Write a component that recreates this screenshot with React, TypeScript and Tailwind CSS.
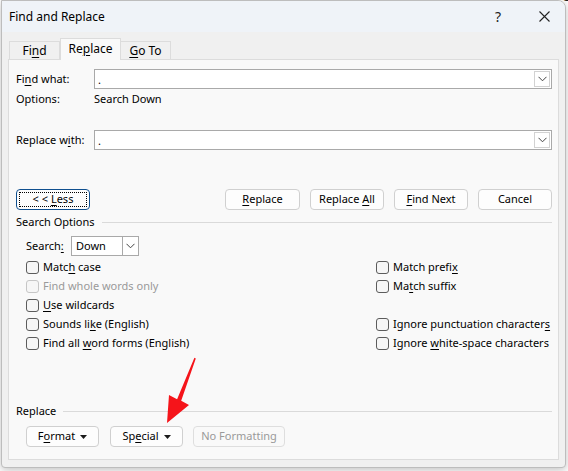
import React from 'react';

const font = { fontFamily: '"Noto Sans", "Open Sans", sans-serif' };

const U: React.FC<{ children: React.ReactNode }> = ({ children }) => (
  <span className="underline underline-offset-2">{children}</span>
);

const Chevron = () => (
  <svg width="9" height="6" viewBox="0 0 9 6" fill="none">
    <path d="M0.5 0.8 L4.5 4.8 L8.5 0.8" stroke="#444" strokeWidth="1" />
  </svg>
);

const Caret = () => (
  <svg width="7" height="4" viewBox="0 0 7 4" className="ml-[5px]">
    <path d="M0 0 H7 L3.5 4 Z" fill="#1a1a1a" />
  </svg>
);

const ComboInput: React.FC = () => (
  <div className="flex-1 h-[20px] flex items-center bg-white border border-[#a9a9a9]">
    <span className="pl-[3px] text-[11px] leading-none text-black">.</span>
    <div className="ml-auto mr-px h-[16px] w-[16px] flex items-center justify-center border border-[#d2d2d2]">
      <Chevron />
    </div>
  </div>
);

const Btn: React.FC<{ children: React.ReactNode; className?: string; disabled?: boolean }> = ({
  children,
  className = '',
  disabled,
}) => (
  <div
    className={`h-[21px] flex items-center justify-center rounded-[4px] border text-[11px] whitespace-nowrap ${
      disabled ? 'border-[#dedede] text-[#9a9a9a] bg-[#f9f9f9]' : 'border-[#d0d0d0] bg-[#fdfdfd] text-black'
    } ${className}`}
  >
    {children}
  </div>
);

const Check: React.FC<{ children: React.ReactNode; disabled?: boolean }> = ({ children, disabled }) => (
  <div className="h-[19px] flex items-center">
    <div
      className={`w-[13px] h-[13px] shrink-0 rounded-[3px] border bg-[#f6f6f6] ${
        disabled ? 'border-[#c6c6c6]' : 'border-[#5c5c5c]'
      }`}
    />
    <span className={`ml-[4px] text-[11px] whitespace-nowrap ${disabled ? 'text-[#9a9a9a]' : 'text-black'}`}>
      {children}
    </span>
  </div>
);

const GroupLabel: React.FC<{ label: string }> = ({ label }) => (
  <div className="h-[16px] flex items-center">
    <span className="text-[11px] text-black whitespace-nowrap">{label}</span>
    <div className="flex-1 ml-[7px] h-px bg-[#dadada]" />
  </div>
);

export default function App() {
  return (
    <div className="relative w-[568px] h-[471px] bg-white overflow-hidden" style={font}>
      {/* document behind the dialog */}
      <div className="absolute left-[40px] top-[-15px] w-full text-[14px] text-[#222] whitespace-nowrap">
        the document text runs here behind the dialog window and is cut off at the top edge
      </div>
      <div className="absolute left-[60px] top-[466px] w-full text-[14px] text-[#222] whitespace-nowrap">
        ehind the dialog window and in the docu text will link the page in which
      </div>

      {/* dialog */}
      <div className="relative ml-px w-[565px] h-[468px] flex flex-col bg-[#f0f0f0] border border-[#bdbdbd] rounded-tr-[8px] rounded-b-[4px] shadow-[0_2px_8px_rgba(0,0,0,0.25)] overflow-hidden">
        {/* title bar */}
        <div className="h-[31px] shrink-0 flex items-center bg-[#eff3f8] pl-[7px]">
          <span className="text-[12px] text-black">Find and Replace</span>
          <span className="ml-auto text-[14px] text-[#222] mr-[38px]">?</span>
          <svg width="11" height="11" viewBox="0 0 11 11" className="mr-[15px]">
            <path d="M0.5 0.5 L10.5 10.5 M10.5 0.5 L0.5 10.5" stroke="#222" strokeWidth="1.1" />
          </svg>
        </div>

        <div className="pl-[6px] pt-[6px]">
          {/* tabs */}
          <div className="flex items-end h-[21px] text-[12px] text-black">
            <div className="w-[51px] h-[18px] flex items-center justify-center border border-b-0 border-[#dcdcdc] bg-[#f0f0f0] ml-px">
              Fi<U>n</U>d
            </div>
            <div className="w-[61px] h-[22px] -mb-px z-10 flex items-center justify-center border border-b-0 border-[#dcdcdc] bg-[#f9f9f9] pb-[2px]">
              Re<U>p</U>lace
            </div>
            <div className="w-[50px] h-[18px] flex items-center justify-center border border-b-0 border-l-0 border-[#dcdcdc] bg-[#f0f0f0]">
              <span>
                <U>G</U>o To
              </span>
            </div>
          </div>

          {/* panel */}
          <div className="w-[551px] h-[401px] border border-[#dcdcdc] bg-[#f9f9f9] pl-[7px] pr-[6px] pt-[9px] flex flex-col">
            <div className="flex items-center h-[20px]">
              <span className="w-[78px] text-[11px] text-black">
                Fi<U>n</U>d what:
              </span>
              <ComboInput />
            </div>
            <div className="flex items-center h-[20px] text-[11px] text-black">
              <span className="w-[78px]">Options:</span>
              <span>Search Down</span>
            </div>
            <div className="flex items-center h-[20px] mt-[21px]">
              <span className="w-[78px] text-[11px] text-black">
                Replace w<U>i</U>th:
              </span>
              <ComboInput />
            </div>

            {/* action buttons */}
            <div className="flex items-center mt-[39px] gap-[9px]">
              <div className="w-[74px] h-[21px] rounded-[4px] border border-[#0f4f8f] p-[2px] bg-[#fdfdfd]">
                <div className="h-full flex items-center justify-center border border-dotted border-black text-[11px] text-black">
                  <span>
                    &lt; &lt; <U>L</U>ess
                  </span>
                </div>
              </div>
              <div className="flex-1" />
              <Btn className="w-[75px] mr-[1px]">
                <span>
                  <U>R</U>eplace
                </span>
              </Btn>
              <Btn className="w-[74px]">
                <span>
                  Replace <U>A</U>ll
                </span>
              </Btn>
              <Btn className="w-[74px] ml-[1px]">
                <span>
                  <U>F</U>ind Next
                </span>
              </Btn>
              <Btn className="w-[74px] ml-[1px]">Cancel</Btn>
            </div>

            <div className="mt-[4px]">
              <GroupLabel label="Search Options" />
            </div>

            <div className="pl-[10px]">
              <div className="flex items-center h-[20px] mt-[6px]">
                <span className="w-[45px] text-[11px] text-black">
                  Search<U>:</U>
                </span>
                <div className="w-[68px] h-[20px] flex items-center bg-white border border-[#a9a9a9]">
                  <span className="pl-[4px] text-[11px] text-black flex-1">Down</span>
                  <div className="w-[16px] h-full flex items-center justify-center border-l border-[#a9a9a9]">
                    <Chevron />
                  </div>
                </div>
              </div>

              <div className="grid grid-cols-[350px_1fr] mt-[2px]">
                <div className="flex flex-col">
                  <Check>
                    Matc<U>h</U> case
                  </Check>
                  <Check disabled>Find whole words only</Check>
                  <Check>
                    <U>U</U>se wildcards
                  </Check>
                  <Check>
                    Sounds li<U>k</U>e (English)
                  </Check>
                  <Check>
                    Find all <U>w</U>ord forms (English)
                  </Check>
                </div>
                <div className="flex flex-col">
                  <Check>
                    Match prefi<U>x</U>
                  </Check>
                  <Check>
                    Ma<U>t</U>ch suffix
                  </Check>
                  <div className="h-[19px]" />
                  <Check>
                    Ignore punctuation character<U>s</U>
                  </Check>
                  <Check>
                    Ignore <U>w</U>hite-space characters
                  </Check>
                </div>
              </div>
            </div>

            <div className="mt-[50px]">
              <GroupLabel label="Replace" />
            </div>

            <div className="flex items-center mt-[7px] pl-[10px]">
              <Btn className="w-[73px] h-[20px]">
                <span>
                  F<U>o</U>rmat
                </span>
                <Caret />
              </Btn>
              <Btn className="w-[73px] h-[20px] ml-[11px]">
                <span>
                  Sp<U>e</U>cial
                </span>
                <Caret />
              </Btn>
              <Btn className="w-[92px] h-[20px] ml-[10px]" disabled>
                No Formatting
              </Btn>
            </div>
          </div>
        </div>
      </div>

      {/* red annotation arrow */}
      <svg className="absolute left-0 top-0 pointer-events-none" width="568" height="471">
        <polygon
          points="194.4,357.7 195.8,358.4 181.2,400.7 189,405 167,423 169,395 177.1,399.3"
          fill="#f5141a"
        />
      </svg>
    </div>
  );
}
